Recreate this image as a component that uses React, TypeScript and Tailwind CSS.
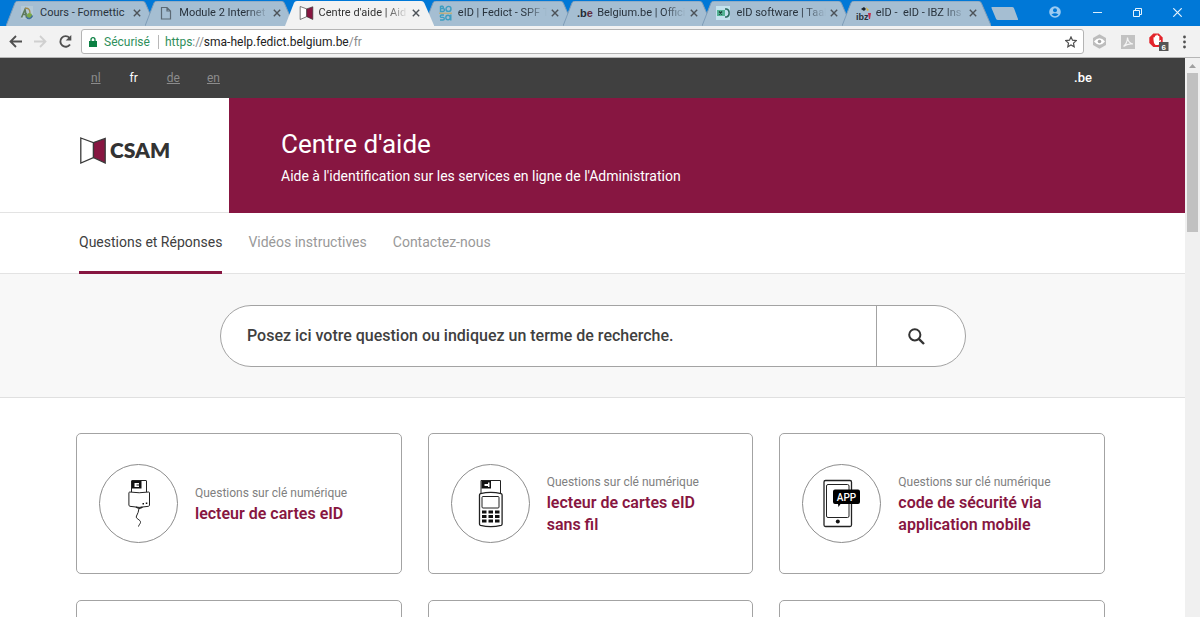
import React, { useState } from "react";

const tabs = [
  { id: "formettic", title: "Cours - Formettic" },
  { id: "module", title: "Module 2 Internet" },
  { id: "csam", title: "Centre d'aide | Aid" },
  { id: "bosa", title: "eID | Fedict - SPF T" },
  { id: "be", title: "Belgium.be | Offici" },
  { id: "eid", title: "eID software | Taal" },
  { id: "ibz", title: "eID -  eID - IBZ Ins" },
];

const languages = ["nl", "fr", "de", "en"];

const pages = ["Questions et Réponses", "Vidéos instructives", "Contactez-nous"];

const cards = [
  { icon: "usb", title: "lecteur de cartes eID" },
  { icon: "reader", title: "lecteur de cartes eID sans fil" },
  { icon: "app", title: "code de sécurité via application mobile" },
];

function Book({ className }: { className: string }) {
  return (
    <svg className={className} viewBox="0 0 26 27" aria-hidden="true">
      <path d="M.8 1 13.500 5.600V20.500L.8 26z" fill="#fff" stroke="#3a3a3a" strokeWidth="1.300" />
      <path d="M13.500 5.600 25.200 1.500v24.500L13.500 20.500z" fill="#871641" stroke="#3a3a3a" strokeWidth="1.300" />
    </svg>
  );
}

function Favicon({ id }: { id: string }) {
  if (id === "csam") return <Book className="mr-px h-[14px] w-[15px] shrink-0" />;
  return (
    <svg className="h-4 w-4 shrink-0" viewBox="0 0 16 16" aria-hidden="true">
      {id === "formettic" && (
        <>
          <path d="M1 1h12v13H1z" fill="#b4c9d6" />
          <path d="M1.500 12.500 5 4.500l1.500 8M3.500 9.500 7 9" fill="none" stroke="#5d7a5c" strokeWidth="1.600" />
          <path d="M5 3.500c3-1 5 1 5 4.500" fill="none" stroke="#a08a4c" strokeWidth="1.300" />
          <circle cx="9.500" cy="10.500" r="2.600" fill="#7aa848" />
          <path d="M6.500 12c1.500 2.500 5 2 6-1.500" fill="none" stroke="#3f6f98" strokeWidth="1.500" />
        </>
      )}
      {id === "module" && (
        <path
          d="M2.500 2.500h5.500l3.500 3.500v8h-9zM8 2.500v3.500h3.500"
          fill="none"
          stroke="#5c6a75"
          strokeWidth="1.200"
        />
      )}
      {id === "bosa" && (
        <>
          <g fill="none" stroke="#3d9dc0" strokeWidth="1.400">
            <path d="M2.500 1v5.500h2.500a1.300 1.300 0 0 0 0-3H2.500M2.500 1.200h2a1.200 1.200 0 0 1 0 2.300" />
            <circle cx="10.500" cy="3.900" r="2.500" />
            <path d="M6 10H3.500a1 1 0 0 0 0 2.400H5A1.200 1.200 0 0 1 5 15H2" />
            <circle cx="10" cy="12.500" r="2.200" />
            <path d="M12.800 9.500V15.500" />
          </g>
          <path d="M1 8.200h13" stroke="#c9a95b" strokeWidth="1" />
        </>
      )}
      {id === "be" && (
        <text x="0" y="12" fontFamily="Liberation Sans" fontWeight="700" fontSize="11">
          <tspan fill="#222c36">.</tspan>
          <tspan fill="#222c36">b</tspan>
          <tspan fill="#5f2c40">e</tspan>
        </text>
      )}
      {id === "eid" && (
        <>
          <path d="M0 1h14v14H0z" fill="#c4e2ee" />
          <path d="M1 5h8v6H1z" fill="#54b394" />
          <path d="m3 6.500 3 3M6 6.500l-3 3" stroke="#183e38" strokeWidth="1.300" />
          <path d="M9 4h1.500c3.500.5 3.500 7.500 0 8H9" fill="none" stroke="#2b6b5e" strokeWidth="1.500" />
        </>
      )}
      {id === "ibz" && (
        <>
          <text x="0" y="15" fontFamily="Liberation Sans" fontWeight="700" fontSize="9" fill="#26323d">
            ibz
          </text>
          <path d="M5 4 8 2l2 2-2 2z" fill="#1c242c" />
          <path d="m10 2 3 3-2 1z" fill="#d9b23a" />
          <path d="M12 8h3l-1 6h-1z" fill="#c22e4c" />
        </>
      )}
    </svg>
  );
}

function CloseIcon() {
  return (
    <svg className="h-2 w-2" viewBox="0 0 8 8" aria-hidden="true">
      <path d="m.8.8 6.400 6.400M7.200.8.8 7.200" stroke="#4c5258" strokeWidth="1.400" />
    </svg>
  );
}

function TabStrip() {
  return (
    <div className="flex h-[26px] shrink-0 bg-[#0078d7] pl-1.5">
      <div className="flex min-w-0 flex-1 items-end pr-2.5">
        {tabs.map((tab) => {
          const active = tab.id === "csam";
          return (
            <div
              key={tab.id}
              className={`relative -mr-2.5 flex h-[25px] min-w-0 flex-1 items-center pr-3.5 pb-0.5 pl-3.5 ${active ? "z-10" : ""}`}
            >
              <svg
                className="absolute inset-0 h-full w-full"
                viewBox="0 0 150 25"
                preserveAspectRatio="none"
                aria-hidden="true"
              >
                <path d="M0 25 9 2q.8-2 3-2h125q2 0 3 2l10 23z" fill={active ? "#f2f2f2" : "#a5bed2"} />
                {!active && <path d="M0 25 9 2q.8-2 3-2h125q2 0 3 2l10 23" fill="none" stroke="#7e9db8" />}
              </svg>
              <span className="relative flex w-full min-w-0 items-center">
                <Favicon id={tab.id} />
                <span
                  className={`ml-1 min-w-0 flex-1 text-[11px] leading-4 whitespace-pre ${active ? "text-[#333]" : "text-[#28323c]"} ${tab.id === "formettic" ? "" : "[mask-image:linear-gradient(to_right,black_75%,transparent)]"}`}
                >
                  {tab.title}
                </span>
                <button type="button" aria-label="Fermer l'onglet" className="ml-1 shrink-0">
                  <CloseIcon />
                </button>
              </span>
            </div>
          );
        })}
      </div>
      <button type="button" aria-label="Nouvel onglet" className="h-[26px] w-[30px]">
        <svg className="h-[26px] w-[30px]" viewBox="0 0 30 26" aria-hidden="true">
          <path d="M1 7h20q1.500 0 2 1.300l4 10.700q.3 1-.7 1H7q-1.500 0-2-1.300L.5 8q-.3-1 .5-1z" fill="#a5bed2" />
        </svg>
      </button>
      <div className="flex w-[179px] items-center pb-0.5 pl-[25px]">
        <button type="button" aria-label="Profil" className="w-[17px]">
          <svg className="mx-auto h-3 w-3" viewBox="0 0 12 12" aria-hidden="true">
            <circle cx="6" cy="6" r="5.800" fill="#9ccbf1" />
            <circle cx="6" cy="4.200" r="2" fill="#0078d7" />
            <path d="M2.500 8.500q3.500-2.500 7 0-3.500 3.500-7 0z" fill="#0078d7" />
          </svg>
        </button>
        <button type="button" aria-label="Réduire" className="ml-6 w-5">
          <svg className="mx-auto h-3 w-[9px]" viewBox="0 0 9 12" aria-hidden="true">
            <path d="M0 6.500h9" stroke="#dceefb" />
          </svg>
        </button>
        <button type="button" aria-label="Restaurer" className="ml-5 w-5">
          <svg className="mx-auto h-[9px] w-[9px]" viewBox="0 0 9 9" fill="none" stroke="#e8f4fd" aria-hidden="true">
            <path d="M.5 2.500h6v6h-6zM2.500 2V.5h6v6H7" />
          </svg>
        </button>
        <button type="button" aria-label="Fermer" className="ml-5 w-5">
          <svg className="mx-auto h-[9px] w-[9px]" viewBox="0 0 9 9" stroke="#e8f4fd" aria-hidden="true">
            <path d="m.3.3 8.400 8.400M8.700.3.3 8.700" strokeWidth="1.200" />
          </svg>
        </button>
      </div>
    </div>
  );
}

function Toolbar() {
  const [url, setUrl] = useState("https://sma-help.fedict.belgium.be/fr");
  const rest = url.replace("https://", "");

  return (
    <div className="flex h-8 shrink-0 items-center border-b border-[#b6b6b6] bg-[#f2f2f2]">
      <div className="flex w-[81px] shrink-0 items-center gap-2.5 pl-2">
        <button type="button" aria-label="Précédent">
          <svg className="h-[15px] w-[15px]" viewBox="0 0 15 15" fill="none" stroke="#505050" strokeWidth="1.800">
            <path d="M14 7.500H2.500M8 2 2.500 7.500 8 13" />
          </svg>
        </button>
        <button type="button" aria-label="Suivant" disabled>
          <svg className="h-[15px] w-[15px]" viewBox="0 0 15 15" fill="none" stroke="#d0d0d0" strokeWidth="1.800">
            <path d="M1 7.500h11.500M7 2l5.500 5.500L7 13" />
          </svg>
        </button>
        <button type="button" aria-label="Actualiser">
          <svg className="h-[15px] w-[15px]" viewBox="0 0 15 15">
            <path d="M12 10.500A5.300 5.300 0 1 1 11.500 3.800" fill="none" stroke="#505050" strokeWidth="1.900" />
            <path d="M13.300 1v5.600H7.700z" fill="#505050" />
          </svg>
        </button>
      </div>
      <div className="flex h-[25px] min-w-0 flex-1 items-center rounded-[3px] border border-[#b4b4b4] bg-white pr-1.5 pl-[7px] text-[12px] leading-4">
        <svg className="h-[10px] w-2 shrink-0" viewBox="0 0 8 10" aria-hidden="true">
          <path d="M0 4h8v6H0z" fill="#0b8043" />
          <path d="M2 4.500V2.700a2 2 0 0 1 4 0v1.800" fill="none" stroke="#0b8043" strokeWidth="1.300" />
        </svg>
        <span className="ml-[7px] text-[#2f8f5b]">Sécurisé</span>
        <span className="mr-1.5 ml-2 h-3.5 w-px bg-[#b8b8b8]" />
        <label className="relative min-w-0 flex-1">
          <span aria-hidden="true" className="block whitespace-pre">
            <span className="text-[#2f8f5b]">https</span>
            <span className="text-[#8a8a8a]">://</span>
            <span className="text-[#222]">{rest.split("/")[0]}</span>
            <span className="text-[#8a8a8a]">{rest.slice(rest.split("/")[0].length)}</span>
          </span>
          <input
            aria-label="Adresse"
            value={url}
            onChange={(e) => setUrl(e.target.value)}
            className="absolute inset-0 w-full bg-transparent text-transparent caret-black outline-none"
          />
        </label>
        <button type="button" aria-label="Ajouter aux favoris">
          <svg className="h-3 w-3" viewBox="0 0 12 12" fill="none" stroke="#505050" strokeWidth="1.200">
            <path d="m6 .9 1.500 3.300 3.700.4-2.700 2.500.7 3.700L6 9 2.800 10.800l.7-3.700L.8 4.600l3.700-.4z" />
          </svg>
        </button>
      </div>
      <div className="flex w-[116px] shrink-0 items-center pl-2">
        <button type="button" aria-label="Extension de confidentialité">
          <svg className="h-[15px] w-[15px]" viewBox="0 0 15 15">
            <path d="M7.500.3 14 4v7l-6.500 3.700L1 11V4z" fill="#bdbdbd" />
            <path d="M2 7.500q5.500-6.500 11 0-5.500 6.500-11 0z" fill="#fff" />
            <circle cx="7.500" cy="7.500" r="1.800" fill="#a8a8a8" />
          </svg>
        </button>
        <button type="button" aria-label="Adobe Acrobat" className="ml-3.5">
          <svg className="h-3.5 w-3.5" viewBox="0 0 14 14">
            <path d="M0 0h14v14H0z" fill="#c2c2c2" />
            <path
              d="M2.500 11.500Q6.500 8 6.500 2.500 7 8 12 9 7 8 2.500 11.500z"
              fill="none"
              stroke="#f4f4f4"
              strokeWidth="1.200"
            />
          </svg>
        </button>
        <button type="button" aria-label="Bloqueur de publicités" className="ml-3.5">
          <svg className="h-[19px] w-5" viewBox="0 0 20 19">
            <path d="M4.300 1.500h5.400l4 4v5.500l-4 4H4.300l-4-4V5.500z" fill="#e3242b" />
            <path d="M4.500 8V5.500q.7-1 1.400 0V4q.7-1 1.400 0V3q.8-1 1.500 0v1q.8-.8 1.500.2V9l1-1q1 0 .7 1L9.500 13H6.500Q4.500 11.500 4.500 8z" fill="#fff" />
            <path d="M10 10h9.500v9H10z" fill="#555" />
            <text x="12.500" y="17.500" fontFamily="Liberation Sans" fontSize="8" fontWeight="700" fill="#fff">
              6
            </text>
          </svg>
        </button>
        <button type="button" aria-label="Menu" className="ml-3.5">
          <svg className="h-3.5 w-[3px]" viewBox="0 0 3 14" fill="#505050">
            <circle cx="1.500" cy="2" r="1.400" />
            <circle cx="1.500" cy="7" r="1.400" />
            <circle cx="1.500" cy="12" r="1.400" />
          </svg>
        </button>
      </div>
    </div>
  );
}

function CardIcon({ icon }: { icon: string }) {
  return (
    <svg className="h-20 w-20 shrink-0" viewBox="0 0 80 80" fill="none" stroke="#222" aria-hidden="true">
      <circle cx="39.500" cy="39.500" r="39" stroke="#8c8c8c" />
      {icon === "usb" && (
        <>
          <path d="M32.500 28V17q0-.5.500-.5h14q.5 0 .5.500v11" />
          <path d="M33 17h9.500v7.500H33z" fill="#111" stroke="none" />
          <path d="M35.500 19H40v1.500h-2.500v1H40V23h-4.500z" fill="#fff" stroke="none" />
          <path d="M30.700 28q9.500 1.500 19 0 .8 0 .8 1v12q0 1-1 1.300-9.300 2.200-18.600 0-1-.3-1-1.300V29q0-1 .8-1z" />
          <path d="M43.500 39h1.500v1.500h-1.500zM46.800 38.500h1.500V40h-1.500z" fill="#111" stroke="none" />
          <path d="M37 43q3.500 2.500 6.500 0" strokeWidth="1.500" />
          <path d="M40 44.500q-.5 4-2.500 7.500c-1.500 3 4.500 3.500 4 6.500-.3 1.500-1.500 2-2 4" />
        </>
      )}
      {icon === "reader" && (
        <>
          <path d="M30 30V16.500h19.500V30" />
          <path d="M30.500 17h9.500v7.500h-9.500z" fill="#111" stroke="none" />
          <path d="M38.500 18.500v4.500H37v-1h-3.500v-2H37v-1.500z" fill="#fff" stroke="none" />
          <path
            d="M28.500 31q0-1 1-1.300 10.300-2.500 20.600 0 1 .3 1 1.300v29q0 1-1 1.300-10.300 2.500-20.600 0-1-.3-1-1.300z"
            fill="#fff"
            strokeWidth="1.300"
          />
          <rect x="31" y="32.500" width="17" height="11.500" rx="1" />
          <path
            d="M31 46.500h4.500v3H31zm6.500 0H42v3h-4.500zm6.500 0h4.500v3H44zM31 51h4.500v3H31zm6.500 0H42v3h-4.500zm6.500 0h4.500v3H44zM31 55.500h4.500v3H31zm6.500 0H42v3h-4.500zm6.500 0h4.500v3H44z"
            fill="#111"
            stroke="none"
          />
        </>
      )}
      {icon === "app" && (
        <>
          <rect x="22" y="16.500" width="27.500" height="46" rx="1.500" strokeWidth="1.300" />
          <rect x="24.500" y="20.500" width="22.500" height="33" rx="1.500" />
          <circle cx="35.800" cy="57.500" r="2" fill="#111" stroke="none" />
          <path
            d="M33 25.500h23q2 0 2 2V38q0 2-2 2H38.500L36.500 43l-.5-3h-3q-2 0-2-2V27.500q0-2 2-2z"
            fill="#000"
            stroke="none"
          />
          <text
            x="44.500"
            y="36.500"
            textAnchor="middle"
            fill="#fff"
            stroke="none"
            fontFamily="Roboto"
            fontWeight="500"
            fontSize="10"
          >
            APP
          </text>
        </>
      )}
    </svg>
  );
}

function HelpPage() {
  const [question, setQuestion] = useState("");

  return (
    <div className="min-w-0 flex-1 overflow-hidden bg-white">
      {/* Languages */}
      <div className="flex h-10 items-center justify-between bg-[#404040] pr-[93px] pl-[91px] text-[12px] text-[#8c8c8c]">
        <nav className="flex gap-[27px]">
          {languages.map((lang) => (
            <a key={lang} href={`/${lang}`} className={lang === "fr" ? "px-0.5 text-white" : "underline"}>
              {lang}
            </a>
          ))}
        </nav>
        <a href="https://www.belgium.be" className="text-[13px] font-medium text-white">
          .be
        </a>
      </div>

      {/* Logo and title */}
      <header className="flex h-[115px]">
        <a href="/" className="flex w-[229px] shrink-0 items-center gap-1 border-b border-[#e3e3e3] pb-2.5 pl-20">
          <Book className="h-[27px] w-[26px]" />
          <span className="font-['Lato',sans-serif] text-[21px] leading-6 font-extrabold text-[#333]">CSAM</span>
        </a>
        <div className="flex-1 bg-[#871641] pt-7 pl-[52px] text-white">
          <h1 className="text-[26px] leading-9">Centre d'aide</h1>
          <p className="mt-1 text-[14px] leading-5">
            Aide à l'identification sur les services en ligne de l'Administration
          </p>
        </div>
      </header>

      <nav className="flex h-[61px] gap-[26px] border-b border-[#e3e3e3] pl-[79px] text-[14px] text-[#999]">
        {pages.map((page, i) => (
          <a
            key={page}
            href="#"
            className={
              i === 0
                ? "-mb-px flex items-center border-b-3 border-[#871641] text-[#404040]"
                : "flex items-center pb-0.5"
            }
          >
            {page}
          </a>
        ))}
      </nav>

      {/* Search */}
      <section className="border-b border-[#e0e0e0] bg-[#f8f8f8] pt-[31px] pr-[219px] pb-[30px] pl-[220px]">
        <form
          onSubmit={(e) => e.preventDefault()}
          className="flex h-[62px] overflow-hidden rounded-full border border-[#a3a3a3] bg-white"
        >
          <input
            type="search"
            aria-label="Votre question"
            value={question}
            onChange={(e) => setQuestion(e.target.value)}
            placeholder="Posez ici votre question ou indiquez un terme de recherche."
            className="min-w-0 flex-1 pl-[26px] text-[16px] font-medium text-[#404040] outline-none placeholder:text-[#404040]"
          />
          <button
            type="submit"
            aria-label="Rechercher"
            className="flex w-[89px] items-center border-l border-[#a3a3a3] pl-[31px]"
          >
            <svg className="h-[17px] w-[17px]" viewBox="0 0 17 17" fill="none" stroke="#333">
              <circle cx="6.800" cy="6.800" r="5.600" strokeWidth="2" />
              <path d="m10.800 10.800 5.200 5.200" strokeWidth="2.400" />
            </svg>
          </button>
        </form>
      </section>

      <main className="grid grid-cols-3 gap-[26px] pt-[35px] pr-20 pl-[76px]">
        {[...cards, ...cards].map((card, i) => (
          <a
            key={i}
            href="#"
            className="flex h-[141px] items-center gap-4 rounded-[5px] border border-[#a3a3a3] pr-10 pl-[22px]"
          >
            {i < cards.length && (
              <>
                <CardIcon icon={card.icon} />
                <span>
                  <span className="block text-[12px] leading-5 text-[#808080]">Questions sur clé numérique</span>
                  <span className="block text-[16px] leading-[22px] font-semibold text-[#871641]">{card.title}</span>
                </span>
              </>
            )}
          </a>
        ))}
      </main>
    </div>
  );
}

export default function App() {
  return (
    <div className="flex h-screen flex-col overflow-hidden font-['Roboto',sans-serif]">
      <TabStrip />
      <Toolbar />
      <div className="flex min-h-0 flex-1">
        <HelpPage />
        {/* Scrollbar */}
        <div className="flex w-[15px] shrink-0 flex-col items-center bg-[#f0f0f0]">
          <svg className="h-[15px] w-[7px]" viewBox="0 0 7 15" aria-hidden="true">
            <path d="M0 10 3.500 6 7 10z" fill="#a0a0a0" />
          </svg>
          <div className="h-[159px] w-[11px] bg-[#c1c1c1]" />
        </div>
      </div>
    </div>
  );
}
